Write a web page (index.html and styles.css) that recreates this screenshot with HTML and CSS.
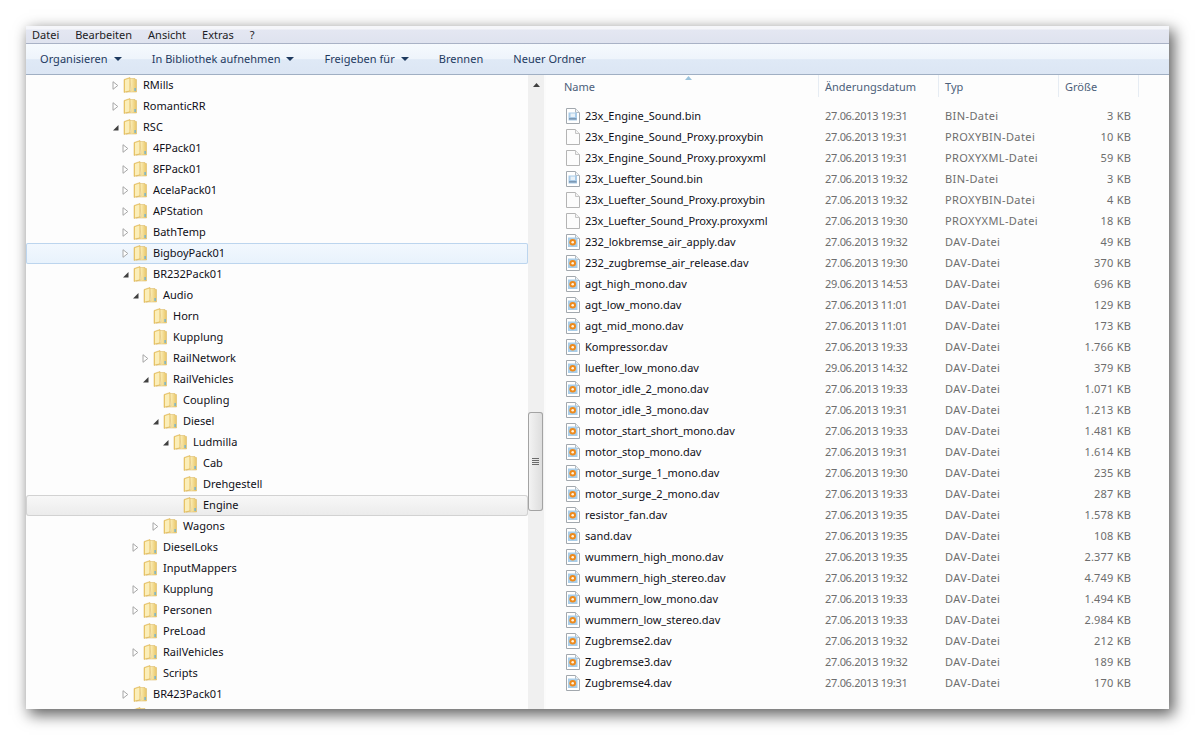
FILE: index.html
```html
<!DOCTYPE html>
<html lang="de">
<head>
<meta charset="utf-8">
<title>Explorer</title>
<link rel="stylesheet" href="styles.css">
</head>
<body>
<svg class="defs" width="0" height="0">
  <defs>
    <linearGradient id="fg" x1="0" y1="0" x2="1" y2="0"><stop offset="0" stop-color="#f6dc8c"/><stop offset=".5" stop-color="#f9e9ae"/><stop offset="1" stop-color="#e8c566"/></linearGradient>
    <symbol id="folder" viewBox="0 0 14 16">
      <path d="M1 2.5 L7 .5 V14 L1 15.5Z" fill="#edc968" stroke="#d8b154" stroke-width=".5"/>
      <path d="M7 1.5 H12 V2.5 H13.5 V15 H3 L8 14Z" fill="url(#fg)" stroke="#d9b55c" stroke-width=".5"/>
      <path d="M2 3 L6.5 1.5 V13.5 L2 14.5Z" fill="#fbeeb9"/>
      <path d="M11.5 11 h1.2 v3 h-1.2z" fill="#5aaee0"/>
    </symbol>
    <symbol id="doc" viewBox="0 0 14 16">
      <path d="M.5 .5 H9.5 L13.5 4.5 V15.5 H.5Z" fill="#fcfcfc" stroke="#b4b4b4"/>
      <path d="M9.5 .5 V4.5 H13.5" fill="#f2f2f2" stroke="#c4c4c4"/>
    </symbol>
    <symbol id="bin" viewBox="0 0 14 16">
      <path d="M.5 .5 H9.5 L13.5 4.5 V15.5 H.5Z" fill="#fff" stroke="#a2a8ae"/>
      <path d="M9.5 .5 V4.5 H13.5" fill="#eef2f5" stroke="#b4bac0"/>
      <rect x="2.5" y="4.5" width="8.5" height="8" fill="#a9cbe8"/>
      <rect x="4.5" y="5.5" width="4.5" height="3.5" fill="#e8f1f8"/>
      <rect x="3" y="10" width="7.5" height="1.6" fill="#7d99b4"/>
    </symbol>
    <symbol id="dav" viewBox="0 0 14 16">
      <path d="M.5 .5 H9.5 L13.5 4.5 V15.5 H.5Z" fill="#fff" stroke="#a2a8ae"/>
      <path d="M9.5 .5 V4.5 H13.5" fill="#eef2f5" stroke="#b4bac0"/>
      <rect x="2" y="3.5" width="9.5" height="9.5" fill="#a9cde8"/>
      <circle cx="6.7" cy="8.2" r="3.3" fill="#ee8a1c"/>
      <circle cx="6.7" cy="8.2" r="1.3" fill="#fff3df"/>
    </symbol>
    <symbol id="closed" viewBox="0 0 7 9"><path d="M1 .7 L5.8 4.5 L1 8.3Z" fill="#fff" stroke="#a6a6a6"/></symbol>
    <symbol id="open" viewBox="0 0 7 9"><path d="M6.5 2 V7.5 H1Z" fill="#404040"/></symbol>
  </defs>
</svg>
<div class="window">
  <nav class="menubar">
    <span>Datei</span><span>Bearbeiten</span><span>Ansicht</span><span>Extras</span><span>?</span>
  </nav>
  <div class="toolbar">
    <span class="tool">Organisieren<i class="caret"></i></span>
    <span class="tool">In Bibliothek aufnehmen<i class="caret"></i></span>
    <span class="tool">Freigeben für<i class="caret"></i></span>
    <span class="tool">Brennen</span>
    <span class="tool">Neuer Ordner</span>
  </div>
  <div class="panes">
    <div class="tree">
      <div class="node l0"><svg class="tw"><use href="#closed"/></svg><svg class="fo"><use href="#folder"/></svg><span>RMills</span></div>
      <div class="node l0"><svg class="tw"><use href="#closed"/></svg><svg class="fo"><use href="#folder"/></svg><span>RomanticRR</span></div>
      <div class="node l0"><svg class="tw"><use href="#open"/></svg><svg class="fo"><use href="#folder"/></svg><span>RSC</span></div>
      <div class="node l1"><svg class="tw"><use href="#closed"/></svg><svg class="fo"><use href="#folder"/></svg><span>4FPack01</span></div>
      <div class="node l1"><svg class="tw"><use href="#closed"/></svg><svg class="fo"><use href="#folder"/></svg><span>8FPack01</span></div>
      <div class="node l1"><svg class="tw"><use href="#closed"/></svg><svg class="fo"><use href="#folder"/></svg><span>AcelaPack01</span></div>
      <div class="node l1"><svg class="tw"><use href="#closed"/></svg><svg class="fo"><use href="#folder"/></svg><span>APStation</span></div>
      <div class="node l1"><svg class="tw"><use href="#closed"/></svg><svg class="fo"><use href="#folder"/></svg><span>BathTemp</span></div>
      <div class="node l1 hover"><svg class="tw"><use href="#closed"/></svg><svg class="fo"><use href="#folder"/></svg><span>BigboyPack01</span></div>
      <div class="node l1"><svg class="tw"><use href="#open"/></svg><svg class="fo"><use href="#folder"/></svg><span>BR232Pack01</span></div>
      <div class="node l2"><svg class="tw"><use href="#open"/></svg><svg class="fo"><use href="#folder"/></svg><span>Audio</span></div>
      <div class="node l3"><svg class="tw none"></svg><svg class="fo"><use href="#folder"/></svg><span>Horn</span></div>
      <div class="node l3"><svg class="tw none"></svg><svg class="fo"><use href="#folder"/></svg><span>Kupplung</span></div>
      <div class="node l3"><svg class="tw"><use href="#closed"/></svg><svg class="fo"><use href="#folder"/></svg><span>RailNetwork</span></div>
      <div class="node l3"><svg class="tw"><use href="#open"/></svg><svg class="fo"><use href="#folder"/></svg><span>RailVehicles</span></div>
      <div class="node l4"><svg class="tw none"></svg><svg class="fo"><use href="#folder"/></svg><span>Coupling</span></div>
      <div class="node l4"><svg class="tw"><use href="#open"/></svg><svg class="fo"><use href="#folder"/></svg><span>Diesel</span></div>
      <div class="node l5"><svg class="tw"><use href="#open"/></svg><svg class="fo"><use href="#folder"/></svg><span>Ludmilla</span></div>
      <div class="node l6"><svg class="tw none"></svg><svg class="fo"><use href="#folder"/></svg><span>Cab</span></div>
      <div class="node l6"><svg class="tw none"></svg><svg class="fo"><use href="#folder"/></svg><span>Drehgestell</span></div>
      <div class="node l6 selected"><svg class="tw none"></svg><svg class="fo"><use href="#folder"/></svg><span>Engine</span></div>
      <div class="node l4"><svg class="tw"><use href="#closed"/></svg><svg class="fo"><use href="#folder"/></svg><span>Wagons</span></div>
      <div class="node l2"><svg class="tw"><use href="#closed"/></svg><svg class="fo"><use href="#folder"/></svg><span>DieselLoks</span></div>
      <div class="node l2"><svg class="tw none"></svg><svg class="fo"><use href="#folder"/></svg><span>InputMappers</span></div>
      <div class="node l2"><svg class="tw"><use href="#closed"/></svg><svg class="fo"><use href="#folder"/></svg><span>Kupplung</span></div>
      <div class="node l2"><svg class="tw"><use href="#closed"/></svg><svg class="fo"><use href="#folder"/></svg><span>Personen</span></div>
      <div class="node l2"><svg class="tw none"></svg><svg class="fo"><use href="#folder"/></svg><span>PreLoad</span></div>
      <div class="node l2"><svg class="tw"><use href="#closed"/></svg><svg class="fo"><use href="#folder"/></svg><span>RailVehicles</span></div>
      <div class="node l2"><svg class="tw none"></svg><svg class="fo"><use href="#folder"/></svg><span>Scripts</span></div>
      <div class="node l1"><svg class="tw"><use href="#closed"/></svg><svg class="fo"><use href="#folder"/></svg><span>BR423Pack01</span></div>
      <div class="node l1"><svg class="tw none"></svg><svg class="fo"><use href="#folder"/></svg><span></span></div>
    </div>
    <div class="scrollbar">
      <svg class="up" width="7" height="4" viewBox="0 0 7 4"><path d="M3.5 0 L7 4 H0Z" fill="#404040"/></svg>
      <div class="thumb"><i></i><i></i><i></i><i></i></div>
    </div>
    <div class="list">
      <div class="head">
        <div class="hc first">Name<svg class="sort" width="7" height="4" viewBox="0 0 7 4"><path d="M3.5 0 L7 4 H0Z" fill="#9cc3dc"/></svg></div>
        <div class="hc">Änderungsdatum</div>
        <div class="hc">Typ</div>
        <div class="hc">Größe</div>
      </div>
      <div class="rows">
        <div class="row"><div class="n"><svg class="ic"><use href="#bin"/></svg>23x_Engine_Sound.bin</div><div class="d">27.06.2013 19:31</div><div class="t">BIN-Datei</div><div class="s">3 KB</div></div>
        <div class="row"><div class="n"><svg class="ic"><use href="#doc"/></svg>23x_Engine_Sound_Proxy.proxybin</div><div class="d">27.06.2013 19:31</div><div class="t">PROXYBIN-Datei</div><div class="s">10 KB</div></div>
        <div class="row"><div class="n"><svg class="ic"><use href="#doc"/></svg>23x_Engine_Sound_Proxy.proxyxml</div><div class="d">27.06.2013 19:31</div><div class="t">PROXYXML-Datei</div><div class="s">59 KB</div></div>
        <div class="row"><div class="n"><svg class="ic"><use href="#bin"/></svg>23x_Luefter_Sound.bin</div><div class="d">27.06.2013 19:32</div><div class="t">BIN-Datei</div><div class="s">3 KB</div></div>
        <div class="row"><div class="n"><svg class="ic"><use href="#doc"/></svg>23x_Luefter_Sound_Proxy.proxybin</div><div class="d">27.06.2013 19:32</div><div class="t">PROXYBIN-Datei</div><div class="s">4 KB</div></div>
        <div class="row"><div class="n"><svg class="ic"><use href="#doc"/></svg>23x_Luefter_Sound_Proxy.proxyxml</div><div class="d">27.06.2013 19:30</div><div class="t">PROXYXML-Datei</div><div class="s">18 KB</div></div>
        <div class="row"><div class="n"><svg class="ic"><use href="#dav"/></svg>232_lokbremse_air_apply.dav</div><div class="d">27.06.2013 19:32</div><div class="t">DAV-Datei</div><div class="s">49 KB</div></div>
        <div class="row"><div class="n"><svg class="ic"><use href="#dav"/></svg>232_zugbremse_air_release.dav</div><div class="d">27.06.2013 19:30</div><div class="t">DAV-Datei</div><div class="s">370 KB</div></div>
        <div class="row"><div class="n"><svg class="ic"><use href="#dav"/></svg>agt_high_mono.dav</div><div class="d">29.06.2013 14:53</div><div class="t">DAV-Datei</div><div class="s">696 KB</div></div>
        <div class="row"><div class="n"><svg class="ic"><use href="#dav"/></svg>agt_low_mono.dav</div><div class="d">27.06.2013 11:01</div><div class="t">DAV-Datei</div><div class="s">129 KB</div></div>
        <div class="row"><div class="n"><svg class="ic"><use href="#dav"/></svg>agt_mid_mono.dav</div><div class="d">27.06.2013 11:01</div><div class="t">DAV-Datei</div><div class="s">173 KB</div></div>
        <div class="row"><div class="n"><svg class="ic"><use href="#dav"/></svg>Kompressor.dav</div><div class="d">27.06.2013 19:33</div><div class="t">DAV-Datei</div><div class="s">1.766 KB</div></div>
        <div class="row"><div class="n"><svg class="ic"><use href="#dav"/></svg>luefter_low_mono.dav</div><div class="d">29.06.2013 14:32</div><div class="t">DAV-Datei</div><div class="s">379 KB</div></div>
        <div class="row"><div class="n"><svg class="ic"><use href="#dav"/></svg>motor_idle_2_mono.dav</div><div class="d">27.06.2013 19:33</div><div class="t">DAV-Datei</div><div class="s">1.071 KB</div></div>
        <div class="row"><div class="n"><svg class="ic"><use href="#dav"/></svg>motor_idle_3_mono.dav</div><div class="d">27.06.2013 19:31</div><div class="t">DAV-Datei</div><div class="s">1.213 KB</div></div>
        <div class="row"><div class="n"><svg class="ic"><use href="#dav"/></svg>motor_start_short_mono.dav</div><div class="d">27.06.2013 19:33</div><div class="t">DAV-Datei</div><div class="s">1.481 KB</div></div>
        <div class="row"><div class="n"><svg class="ic"><use href="#dav"/></svg>motor_stop_mono.dav</div><div class="d">27.06.2013 19:31</div><div class="t">DAV-Datei</div><div class="s">1.614 KB</div></div>
        <div class="row"><div class="n"><svg class="ic"><use href="#dav"/></svg>motor_surge_1_mono.dav</div><div class="d">27.06.2013 19:30</div><div class="t">DAV-Datei</div><div class="s">235 KB</div></div>
        <div class="row"><div class="n"><svg class="ic"><use href="#dav"/></svg>motor_surge_2_mono.dav</div><div class="d">27.06.2013 19:33</div><div class="t">DAV-Datei</div><div class="s">287 KB</div></div>
        <div class="row"><div class="n"><svg class="ic"><use href="#dav"/></svg>resistor_fan.dav</div><div class="d">27.06.2013 19:35</div><div class="t">DAV-Datei</div><div class="s">1.578 KB</div></div>
        <div class="row"><div class="n"><svg class="ic"><use href="#dav"/></svg>sand.dav</div><div class="d">27.06.2013 19:35</div><div class="t">DAV-Datei</div><div class="s">108 KB</div></div>
        <div class="row"><div class="n"><svg class="ic"><use href="#dav"/></svg>wummern_high_mono.dav</div><div class="d">27.06.2013 19:35</div><div class="t">DAV-Datei</div><div class="s">2.377 KB</div></div>
        <div class="row"><div class="n"><svg class="ic"><use href="#dav"/></svg>wummern_high_stereo.dav</div><div class="d">27.06.2013 19:32</div><div class="t">DAV-Datei</div><div class="s">4.749 KB</div></div>
        <div class="row"><div class="n"><svg class="ic"><use href="#dav"/></svg>wummern_low_mono.dav</div><div class="d">27.06.2013 19:33</div><div class="t">DAV-Datei</div><div class="s">1.494 KB</div></div>
        <div class="row"><div class="n"><svg class="ic"><use href="#dav"/></svg>wummern_low_stereo.dav</div><div class="d">27.06.2013 19:33</div><div class="t">DAV-Datei</div><div class="s">2.984 KB</div></div>
        <div class="row"><div class="n"><svg class="ic"><use href="#dav"/></svg>Zugbremse2.dav</div><div class="d">27.06.2013 19:32</div><div class="t">DAV-Datei</div><div class="s">212 KB</div></div>
        <div class="row"><div class="n"><svg class="ic"><use href="#dav"/></svg>Zugbremse3.dav</div><div class="d">27.06.2013 19:32</div><div class="t">DAV-Datei</div><div class="s">189 KB</div></div>
        <div class="row"><div class="n"><svg class="ic"><use href="#dav"/></svg>Zugbremse4.dav</div><div class="d">27.06.2013 19:31</div><div class="t">DAV-Datei</div><div class="s">170 KB</div></div>
      </div>
    </div>
  </div>
</div>
</body>
</html>
```
FILE: styles.css
```css
* { box-sizing: border-box; }
html, body { height: 100%; }
body {
  margin: 0;
  padding: 26px;
  background: #fff;
  font: 11px/16px "Noto Sans", "Open Sans", sans-serif;
  color: #111;
  overflow: hidden;
}
.defs { position: absolute; }
.window {
  width: 1143px;
  height: 683px;
  background: #fdfdfd;
  box-shadow: 4px 5px 14px 1px rgba(0,0,0,.62);
  display: flex;
  flex-direction: column;
  overflow: hidden;
}
.menubar {
  height: 18px;
  flex: none;
  display: flex;
  align-items: center;
  gap: 16px;
  padding: 0 6px;
  background: linear-gradient(#f5f6fa 0, #f5f6fa 3px, #e4e7f2 4px, #dfe3ef 100%);
  border-bottom: 1px solid #a9b2c6;
  color: #1c1c24;
}
.toolbar {
  height: 31px;
  flex: none;
  display: flex;
  align-items: center;
  padding-left: 14px;
  gap: 30px;
  background: linear-gradient(#f6fafe 0, #eef4fb 50%, #dfe9f6 52%, #dce6f4 100%);
  border-bottom: 1px solid #a0afc3;
  color: #1e3a5f;
  letter-spacing: .035px;
}
.tool { display: flex; align-items: center; }
.caret {
  width: 0;
  height: 0;
  margin-left: 6px;
  border: 4px solid transparent;
  border-top: 4px solid #1e3a5f;
  border-bottom: 0;
}
.panes { flex: 1; min-height: 0; display: flex; }
.tree { width: 502px; flex: none; overflow: hidden; }
.node {
  height: 21px;
  padding-bottom: 1px;
  display: flex;
  align-items: center;
  color: #101018;
}
.l0 { padding-left: 85px; }
.l1 { padding-left: 95px; }
.l2 { padding-left: 105px; }
.l3 { padding-left: 115px; }
.l4 { padding-left: 125px; }
.l5 { padding-left: 135px; }
.l6 { padding-left: 145px; }
.tw { width: 7px; height: 9px; margin: 0 4px 0 1px; flex: none; }
.fo { width: 14px; height: 16px; margin-right: 6px; flex: none; }
.hover {
  background: linear-gradient(#f2f8fe, #e8f2fc);
  box-shadow: inset 0 0 0 1px #bcd5ee;
  border-radius: 2px;
}
.selected {
  background: linear-gradient(#f8f8f8, #ebebeb);
  box-shadow: inset 0 0 0 1px #d2d2d2;
  border-radius: 3px;
}
.scrollbar {
  width: 18px;
  flex: none;
  position: relative;
  background: #f0f0f0;
  border-right: 2px solid #fbfbfb;
}
.up { position: absolute; left: 5px; top: 8px; }
.thumb {
  position: absolute;
  left: 0;
  top: 337px;
  width: 15px;
  height: 99px;
  background: linear-gradient(90deg, #f4f4f4, #dcdcdc);
  box-shadow: inset 0 0 0 1px #a3a3a3;
  border-radius: 3px;
  display: flex;
  flex-direction: column;
  align-items: center;
  justify-content: center;
  gap: 1px;
}
.thumb i { width: 7px; height: 1px; background: #6b6b6b; }
.list { flex: 1; min-width: 0; position: relative; background: #fdfdfd; }
.head, .row {
  display: grid;
  grid-template-columns: 272px 120px 120px 80px;
}
.head { height: 22px; margin-bottom: 9px; color: #4c607a; }
.hc {
  padding: 4px 7px 0;
  border-right: 1px solid #e6ecf3;
  margin-right: -1px;
  height: 22px;
  position: relative;
}
.hc.first { padding-left: 18px; }
.sort { position: absolute; left: 139px; top: 1px; }
.row { height: 21px; padding-bottom: 1px; align-items: center; color: #6d6d6d; }
.row > div { padding: 0 7px; }
.row > .n { display: flex; align-items: center; padding-left: 20px; color: #101018; }
.row > .d { letter-spacing: -.3px; }
.row > .t { letter-spacing: .4px; }
.row > .s { text-align: right; letter-spacing: .2px; }
.ic { width: 14px; height: 16px; margin-right: 5px; flex: none; }
```
